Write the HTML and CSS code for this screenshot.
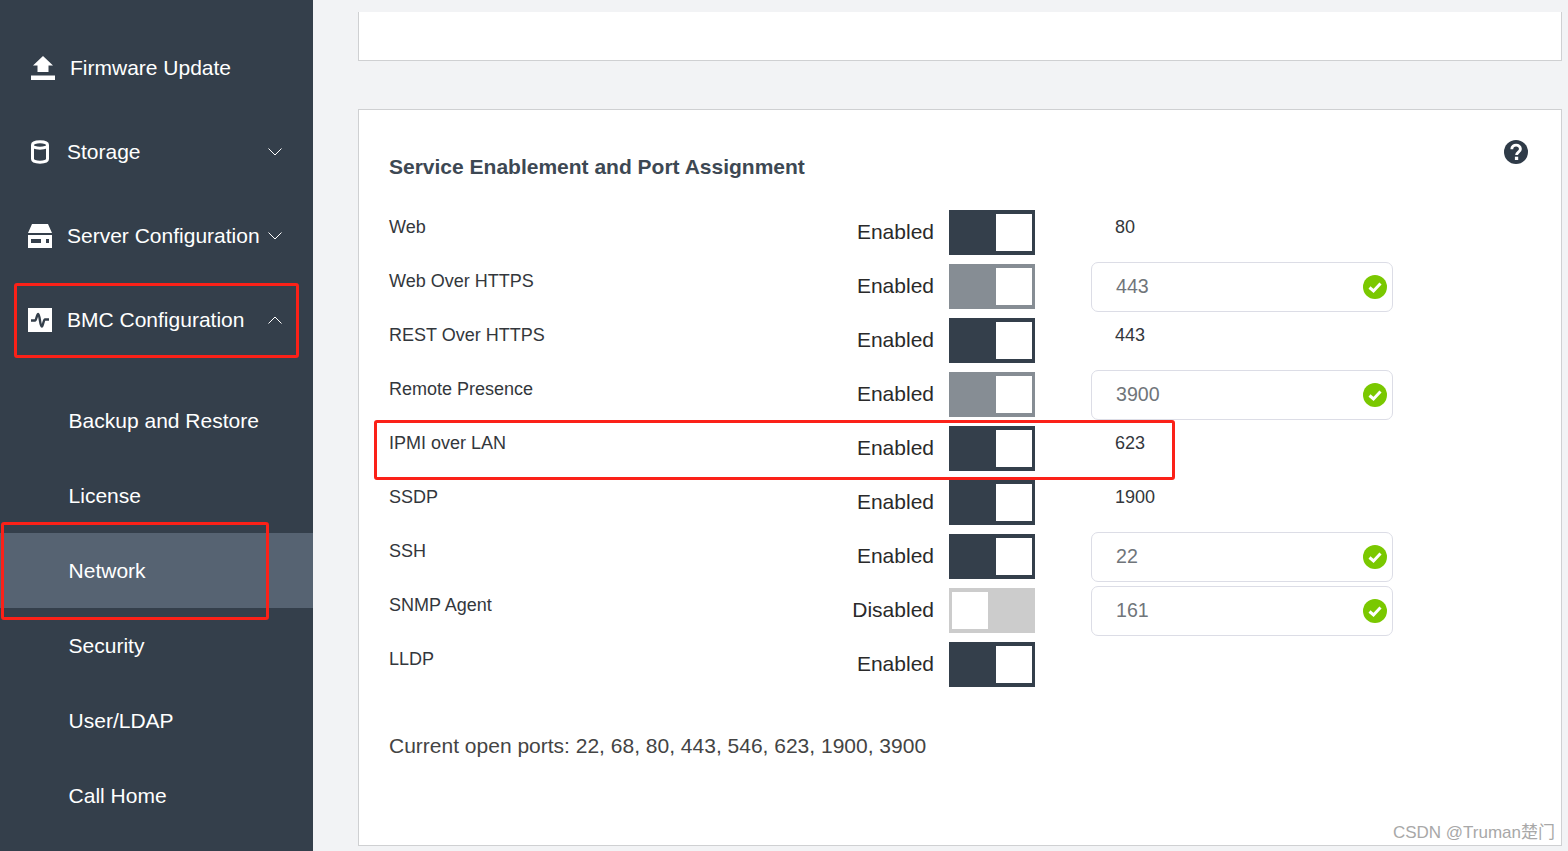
FILE: index.html
```html
<!DOCTYPE html>
<html lang="en">
<head>
<meta charset="utf-8">
<title>Network</title>
<link rel="stylesheet" href="styles.css">
</head>
<body>
<aside class="sidebar">
  <nav class="nav-top">
    <div class="nav-item first">
      <svg class="ico upload" viewBox="0 0 24 24"><path d="M12 0 L22 9.500 H17.500 V16 H6.500 V9.500 H2 Z M0 19.500 H24 V24 H0 Z" fill="#fff"/></svg>
      <span class="nav-label wide">Firmware Update</span>
    </div>
    <div class="nav-item">
      <svg class="ico storage" viewBox="0 0 18 24"><path d="M1.500 5 C1.500 0.800 16.500 0.800 16.500 5 V19 C16.500 23.200 1.500 23.200 1.500 19 Z M1.500 5.500 C1.500 9 16.500 9 16.500 5.500" fill="none" stroke="#fff" stroke-width="3"/></svg>
      <span class="nav-label">Storage</span>
      <svg class="chev" viewBox="0 0 14 8"><path d="M0.500 0.500 L7 7 L13.500 0.500" fill="none" stroke="#fff"/></svg>
    </div>
    <div class="nav-item">
      <svg class="ico server" viewBox="0 0 24 24"><path d="M4 0 H20 L24 9 H0 Z M0 11 H24 V24 H0 Z" fill="#fff"/><path d="M3 15 H13 V19 H3 Z M18 15 H21 V19 H18 Z" fill="#343f4b"/></svg>
      <span class="nav-label">Server Configuration</span>
      <svg class="chev" viewBox="0 0 14 8"><path d="M0.500 0.500 L7 7 L13.500 0.500" fill="none" stroke="#fff"/></svg>
    </div>
    <div class="nav-item">
      <svg class="ico bmc" viewBox="0 0 24 24"><rect width="24" height="24" fill="#fff"/><path d="M3 12.500 H7 C8.500 12.500 8.800 6 10.200 6 C11.800 6 12 18.500 13.800 18.500 C15.200 18.500 15.300 11.500 17 11.500 H21" fill="none" stroke="#343f4b" stroke-width="2.400"/></svg>
      <span class="nav-label">BMC Configuration</span>
      <svg class="chev" viewBox="0 0 14 8"><path d="M0.500 7.500 L7 1 L13.500 7.500" fill="none" stroke="#fff"/></svg>
    </div>
  </nav>
  <ul class="subnav">
    <li class="sub-item">Backup and Restore</li>
    <li class="sub-item">License</li>
    <li class="sub-item active">Network</li>
    <li class="sub-item">Security</li>
    <li class="sub-item">User/LDAP</li>
    <li class="sub-item">Call Home</li>
  </ul>
</aside>

<main class="main">
  <div class="card card-stub"></div>
  <section class="card card-service">
    <svg class="help" viewBox="0 0 24 24"><circle cx="12" cy="12" r="12" fill="#2f3b48"/><path d="M7.800 9.200 C7.800 3.800 16.400 3.800 16.400 9 C16.400 12.200 12.600 12.200 12.600 15" fill="none" stroke="#fff" stroke-width="2.900"/><rect x="10.900" y="16.700" width="3.300" height="3.300" fill="#fff"/></svg>
    <h2 class="title">Service Enablement and Port Assignment</h2>
    <div class="rows">
      <div class="row"><span class="name">Web</span><span class="state">Enabled</span><span class="switch on"><i></i></span><span class="port">80</span></div>
      <div class="row"><span class="name">Web Over HTTPS</span><span class="state">Enabled</span><span class="switch on dim"><i></i></span><span class="field">443<svg class="ok" viewBox="0 0 24 24"><circle cx="12" cy="12" r="12" fill="#7ac800"/><path d="M6.500 12.500 L10.500 16 L17.500 8.500" fill="none" stroke="#fff" stroke-width="3"/></svg></span></div>
      <div class="row"><span class="name">REST Over HTTPS</span><span class="state">Enabled</span><span class="switch on"><i></i></span><span class="port">443</span></div>
      <div class="row"><span class="name">Remote Presence</span><span class="state">Enabled</span><span class="switch on dim"><i></i></span><span class="field">3900<svg class="ok" viewBox="0 0 24 24"><circle cx="12" cy="12" r="12" fill="#7ac800"/><path d="M6.500 12.500 L10.500 16 L17.500 8.500" fill="none" stroke="#fff" stroke-width="3"/></svg></span></div>
      <div class="row"><span class="name">IPMI over LAN</span><span class="state">Enabled</span><span class="switch on"><i></i></span><span class="port">623</span></div>
      <div class="row"><span class="name">SSDP</span><span class="state">Enabled</span><span class="switch on"><i></i></span><span class="port">1900</span></div>
      <div class="row"><span class="name">SSH</span><span class="state">Enabled</span><span class="switch on"><i></i></span><span class="field">22<svg class="ok" viewBox="0 0 24 24"><circle cx="12" cy="12" r="12" fill="#7ac800"/><path d="M6.500 12.500 L10.500 16 L17.500 8.500" fill="none" stroke="#fff" stroke-width="3"/></svg></span></div>
      <div class="row"><span class="name">SNMP Agent</span><span class="state">Disabled</span><span class="switch off"><i></i></span><span class="field">161<svg class="ok" viewBox="0 0 24 24"><circle cx="12" cy="12" r="12" fill="#7ac800"/><path d="M6.500 12.500 L10.500 16 L17.500 8.500" fill="none" stroke="#fff" stroke-width="3"/></svg></span></div>
      <div class="row"><span class="name">LLDP</span><span class="state">Enabled</span><span class="switch on"><i></i></span></div>
    </div>
    <p class="open-ports">Current open ports: 22, 68, 80, 443, 546, 623, 1900, 3900</p>
  </section>
</main>

<div class="mark mark-bmc"></div>
<div class="mark mark-net"></div>
<div class="mark mark-ipmi"></div>
<div class="watermark">CSDN @Truman楚门</div>
</body>
</html>
```

FILE: styles.css
```css
* { box-sizing: border-box; }
html, body { margin: 0; height: 100%; }
body {
  display: flex;
  height: 851px;
  overflow: hidden;
  background: #f2f3f5;
  font-family: "Liberation Sans", Arial, sans-serif;
  color: #1f2328;
  position: relative;
}
.sidebar {
  width: 313px;
  flex: none;
  background: #343f4b;
  color: #fff;
  padding-top: 26px;
}
.nav-item {
  height: 84px;
  display: flex;
  align-items: center;
  padding-left: 28px;
  position: relative;
  font-size: 21px;
}
.ico { flex: none; width: 24px; height: 24px; margin-right: 15px; }
.upload { margin: 0 15px 0 3px; }
.storage { width: 18px; margin: 0 18px 0 3px; }
.nav-label { white-space: nowrap; }
.chev { position: absolute; left: 268px; top: 38px; width: 14px; height: 8px; }
.subnav { list-style: none; margin: 21px 0 0; padding: 0; }
.sub-item {
  height: 75px;
  display: flex;
  align-items: center;
  padding-left: 68.600px;
  font-size: 21px;
}
.sub-item.active { background: #566372; }

.main { flex: 1; padding: 12px 6px 0 45px; min-width: 0; }
.card { background: #fff; border: 1px solid #cfd0d2; }
.card-stub { height: 49px; border-top: 0; margin-bottom: 48px; }
.card-service { height: 737px; position: relative; padding: 44px 30px 0; }
.title {
  margin: 0 0 30px;
  font-size: 21px;
  line-height: 26px;
  font-weight: 700;
  color: #3d4853;
}
.help { position: absolute; left: 1145px; top: 30px; width: 24px; height: 24px; }
.row { height: 54px; display: flex; align-items: flex-start; position: relative; }
.name { width: 400px; flex: none; font-size: 18px; line-height: 24px; margin-top: 5px; color: #33373c; }
.state { width: 145px; flex: none; text-align: right; font-size: 21px; line-height: 26px; margin-top: 9px; margin-right: 15px; color: #2a2a2a; }
.switch {
  width: 86px;
  height: 45px;
  flex: none;
  display: flex;
  padding: 4px 3px 4px 3px;
  margin-right: 56px;
}
.switch i { display: block; width: 36px; height: 37px; background: #fff; }
.switch.on { background: #343f4b; justify-content: flex-end; }
.switch.dim { background: #868d94; }
.switch.off { background: #cccccc; justify-content: flex-start; }
.port { font-size: 18px; line-height: 24px; margin-top: 5px; padding-left: 24px; color: #33373c; }
.field {
  width: 302px;
  height: 50px;
  margin-top: -2px;
  border: 1px solid #dcdde6;
  border-radius: 7px;
  display: flex;
  align-items: center;
  justify-content: space-between;
  padding: 0 5px 2px 24px;
  font-size: 19.600px;
  line-height: 46px;
  color: #70757a;
}
.ok { width: 24px; height: 24px; flex: none; margin-top: 1px; }
.open-ports { margin: 36px 0 0; font-size: 21px; line-height: 28px; color: #444; }

.mark { position: absolute; border: 3px solid #fb2118; border-radius: 3px; }
.mark-bmc { left: 14px; top: 283px; width: 285px; height: 75px; }
.mark-net { left: 1px; top: 522px; width: 268px; height: 98px; }
.mark-ipmi { left: 374px; top: 420px; width: 801px; height: 60px; }
.watermark {
  position: absolute;
  right: 13px;
  top: 821px;
  font-family: "Liberation Sans", "Noto Sans CJK SC", sans-serif;
  font-size: 17px;
  line-height: 24px;
  color: #a8a8a8;
}
```
